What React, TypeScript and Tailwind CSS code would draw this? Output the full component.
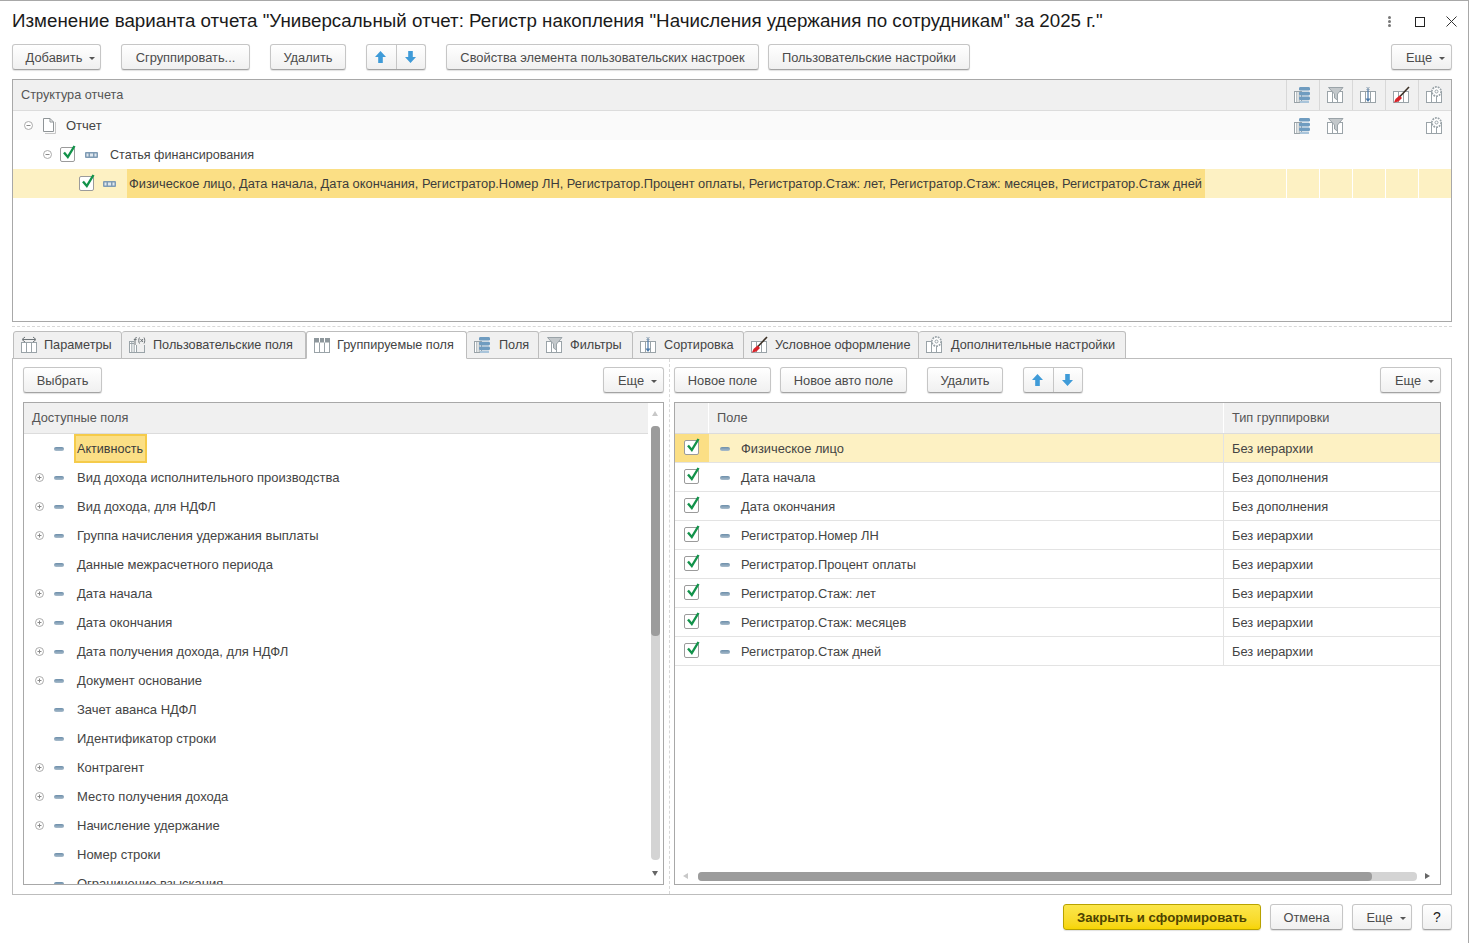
import type { ReactNode } from "react";

const availableFields: [string, boolean][] = [
  ["Активность", false],
  ["Вид дохода исполнительного производства", true],
  ["Вид дохода, для НДФЛ", true],
  ["Группа начисления удержания выплаты", true],
  ["Данные межрасчетного периода", false],
  ["Дата начала", true],
  ["Дата окончания", true],
  ["Дата получения дохода, для НДФЛ", true],
  ["Документ основание", true],
  ["Зачет аванса НДФЛ", false],
  ["Идентификатор строки", false],
  ["Контрагент", true],
  ["Место получения дохода", true],
  ["Начисление удержание", true],
  ["Номер строки", false],
  ["Ограничение взыскания", false],
];

const groupFields = [
  ["Физическое лицо", "Без иерархии"],
  ["Дата начала", "Без дополнения"],
  ["Дата окончания", "Без дополнения"],
  ["Регистратор.Номер ЛН", "Без иерархии"],
  ["Регистратор.Процент оплаты", "Без иерархии"],
  ["Регистратор.Стаж: лет", "Без иерархии"],
  ["Регистратор.Стаж: месяцев", "Без иерархии"],
  ["Регистратор.Стаж дней", "Без иерархии"],
];

function GridBase({ x = 1, w = 15 }: { x?: number; w?: number }) {
  const c = "#9aa3a8";
  const step = w / 3;
  return (
    <g fill="none" stroke={c} strokeWidth="1">
      <rect x={x + 0.5} y="5.5" width={w} height="11" fill="#fff" />
      <path d={`M${x + 0.5 + step} 5.5V16.5M${x + 0.5 + step * 2} 5.5V16.5`} />
    </g>
  );
}

function FieldsIcon() {
  return (
    <svg width="18" height="18" viewBox="0 0 18 18">
      <GridBase w={7} />
      <g fill="#6f9cc0">
        <rect x="6" y="1" width="11" height="3.6" rx="1.4" />
        <rect x="6" y="5.8" width="11" height="3.6" rx="1.4" />
        <rect x="6" y="10.6" width="11" height="3.6" rx="1.4" />
      </g>
      <rect x="7" y="15" width="9" height="2" fill="#a9c4da" />
    </svg>
  );
}

function FilterIcon() {
  return (
    <svg width="18" height="18" viewBox="0 0 18 18">
      <GridBase />
      <path d="M2.5 1.5H17L11.5 8V14L8.5 12V8Z" fill="#c3c8cb" stroke="#9aa3a8" />
    </svg>
  );
}

function SortIcon() {
  return (
    <svg width="18" height="18" viewBox="0 0 18 18">
      <GridBase />
      <path d="M9 3V15" stroke="#4a78a8" strokeWidth="1.2" />
      <path d="M6.5 12.5H11.5L9 16Z" fill="#4a78a8" />
      <path d="M7.5 1L10.5 4M10.5 1L7.5 4" stroke="#7d93a8" strokeWidth="0.9" />
    </svg>
  );
}

function BrushIcon() {
  return (
    <svg width="18" height="18" viewBox="0 0 18 18">
      <GridBase />
      <path d="M17 1L7.5 11" stroke="#3c3026" strokeWidth="1.6" />
      <path d="M7.5 9.5L10 12L6.5 15.5L2 16.5L3.5 13Z" fill="#d8232a" />
    </svg>
  );
}

function GearIcon() {
  return (
    <svg width="18" height="18" viewBox="0 0 18 18">
      <GridBase />
      <circle cx="11.5" cy="5.5" r="4.6" fill="#fff" stroke="#9aa3a8" strokeWidth="1.7" strokeDasharray="1.8 1" />
      <circle cx="11.5" cy="5.5" r="1.5" fill="#fff" stroke="#9aa3a8" />
    </svg>
  );
}

function ParamsIcon() {
  return (
    <svg width="18" height="18" viewBox="0 0 18 18">
      <rect x="1.5" y="6.5" width="15" height="10" fill="#fff" stroke="#9aa3a8" />
      <path d="M6.5 6.5V16.5M11.5 6.5V16.5" stroke="#9aa3a8" />
      <path d="M3 3.5H15" stroke="#6c7377" />
      <path d="M5 1L2 3.5L5 6M13 1L16 3.5L13 6" fill="none" stroke="#6c7377" />
    </svg>
  );
}

function FormulaIcon() {
  return (
    <svg width="18" height="18" viewBox="0 0 18 18">
      <GridBase w={7} />
      <rect x="1.5" y="7.5" width="15" height="9" fill="none" stroke="#9aa3a8" />
      <rect x="6" y="0" width="12" height="9" fill="#f0f0f0" />
      <path d="M7 9V3C7 1.8 8 1.5 9 1.7M5.8 3.6H8.6" fill="none" stroke="#6c7377" />
      <path d="M11.5 1.5C10.5 3 10.5 6 11.5 7.5M16 1.5C17 3 17 6 16 7.5M12.5 3L15 6M15 3L12.5 6" fill="none" stroke="#6c7377" />
    </svg>
  );
}

function GroupedIcon() {
  return (
    <svg width="18" height="18" viewBox="0 0 18 18">
      <GridBase />
      <rect x="1" y="2" width="16" height="4.5" fill="#8e979c" />
      <path d="M6.5 2V6.5M11.5 2V6.5" stroke="#fff" />
    </svg>
  );
}

function CheckBox() {
  return (
    <span className="relative block h-[15px] w-[15px] shrink-0 rounded-[2px] border border-[#9b9b9b] bg-white">
      <svg className="absolute -top-[4px] left-[1px]" width="15" height="16" viewBox="0 0 15 16">
        <path d="M2 8.5L5.8 13L12.5 2" fill="none" stroke="#12924a" strokeWidth="2.4" />
      </svg>
    </span>
  );
}

function TreeToggle({ open }: { open: boolean }) {
  return (
    <svg className="block shrink-0" width="9" height="9" viewBox="0 0 9 9">
      <circle cx="4.5" cy="4.5" r="4" fill="#fff" stroke="#ababab" />
      <path d={open ? "M2.5 4.5H6.5" : "M2.5 4.5H6.5M4.5 2.5V6.5"} stroke="#8a8a8a" />
    </svg>
  );
}

function DashIcon() {
  return <span className="block h-[4px] w-[10px] shrink-0 rounded-[2px] bg-gradient-to-b from-[#6d8fab] to-[#a9bccb]" />;
}

function GroupBar() {
  return (
    <svg className="block shrink-0" width="13" height="6" viewBox="0 0 13 6">
      <rect width="13" height="6" rx="1" fill="#7f9bb4" />
      <path d="M1.5 1.5H3.5V4.5H1.5ZM5 1.5H8V4.5H5ZM9.5 1.5H11.5V4.5H9.5Z" fill="#dfe7ee" />
    </svg>
  );
}

function DocIcon() {
  return (
    <svg className="block shrink-0" width="14" height="16" viewBox="0 0 14 16">
      <path d="M3 15.5H13.5V4" fill="none" stroke="#c6c6c6" />
      <path d="M1.5 .5H8L11.5 4V13.5H1.5Z" fill="#fff" stroke="#8f9497" />
      <path d="M8 .5V4H11.5" fill="none" stroke="#8f9497" />
    </svg>
  );
}

function Btn({ children, className, more }: { children: ReactNode; className: string; more?: boolean }) {
  return (
    <button className={`flex h-[26px] shrink-0 items-center justify-center gap-[7px] rounded-[3px] border border-[#c6c6c6] border-b-[#a3a3a3] bg-gradient-to-b from-white to-[#f0f0f0] pt-[1px] text-[12.85px] text-[#4b4b4b] shadow-[0_1px_1px_rgba(0,0,0,0.12)] ${more ? "pl-[8px]" : ""} ${className}`}>
      {children}
      {more && <span className="mt-[1px] h-0 w-0 border-x-[3px] border-t-[3px] border-x-transparent border-t-[#555]" />}
    </button>
  );
}

function MoveBtns({ className }: { className: string }) {
  const up = "M6.5 1L12 7H8.8V13H4.2V7H1Z";
  const down = "M6.5 13L12 7H8.8V1H4.2V7H1Z";
  return (
    <div className={`flex h-[26px] w-[60px] shrink-0 rounded-[3px] border border-[#c6c6c6] border-b-[#a3a3a3] bg-gradient-to-b from-white to-[#f0f0f0] shadow-[0_1px_1px_rgba(0,0,0,0.12)] ${className}`}>
      <span className="flex flex-1 items-center justify-center border-r border-[#c6c6c6] pr-[1px]">
        <svg width="13" height="14" viewBox="0 0 13 14"><path d={up} fill="#3f9bd8" /></svg>
      </span>
      <span className="flex flex-1 items-center justify-center pr-[1px]">
        <svg width="13" height="14" viewBox="0 0 13 14"><path d={down} fill="#3f9bd8" /></svg>
      </span>
    </div>
  );
}

function Tab({ icon, label, active, className }: { icon: ReactNode; label: string; active?: boolean; className: string }) {
  return (
    <div className={`flex h-[28px] items-center rounded-t-[3px] border border-[#bdbdbd] pl-[6px] text-[12.7px] ${active ? "gap-[6px] border-b-white bg-white" : "gap-[7px] border-l-0 bg-[#f0f0f0]"} ${className}`}>
      {icon}
      <span className="whitespace-nowrap pt-[2px]">{label}</span>
    </div>
  );
}

const iconCols = ["fields", "filter", "sort", "brush", "gear"];

function ColIcon({ kind }: { kind: string }) {
  if (kind === "fields") return <FieldsIcon />;
  if (kind === "filter") return <FilterIcon />;
  if (kind === "sort") return <SortIcon />;
  if (kind === "brush") return <BrushIcon />;
  return <GearIcon />;
}

export default function App() {
  return (
    <div className="h-[943px] w-[1473px] overflow-hidden bg-white font-['Liberation_Sans',Arial,sans-serif] text-[13px] text-[#444]">
      <div className="h-[943px] w-[1469px] border-r border-t border-[#a8a8a8]">
        <div className="flex h-[43px] items-center pb-[2px] pl-[12px] pr-[11px]">
          <h1 className="whitespace-nowrap text-[18.75px] font-normal text-[#1a1a1a]">
            Изменение варианта отчета "Универсальный отчет: Регистр накопления "Начисления удержания по сотрудникам" за 2025 г."
          </h1>
          <div className="ml-auto flex items-center">
            <span className="flex flex-col gap-[1px]">
              <span className="h-[3px] w-[3px] rounded-full bg-[#777]" />
              <span className="h-[3px] w-[3px] rounded-full bg-[#777]" />
              <span className="h-[3px] w-[3px] rounded-full bg-[#777]" />
            </span>
            <span className="ml-[24px] h-[10px] w-[10px] border border-[#222]" />
            <svg className="ml-[21px]" width="11" height="11" viewBox="0 0 11 11">
              <path d="M.5 .5L10.5 10.5M10.5 .5L.5 10.5" stroke="#333" />
            </svg>
          </div>
        </div>

        <div className="flex w-[1452px] pl-[12px]">
          <Btn className="w-[89px]" more>Добавить</Btn>
          <Btn className="ml-[20px] w-[129px]">Сгруппировать...</Btn>
          <Btn className="ml-[20px] w-[76px]">Удалить</Btn>
          <MoveBtns className="ml-[20px]" />
          <Btn className="ml-[20px] w-[313px]">Свойства элемента пользовательских настроек</Btn>
          <Btn className="ml-[9px] w-[202px]">Пользовательские настройки</Btn>
          <Btn className="ml-auto w-[61px]" more>Еще</Btn>
        </div>

        <section className="ml-[12px] mt-[9px] h-[243px] w-[1440px] overflow-hidden border border-[#a8a8a8]">
          <div className="flex h-[31px] border-b border-[#dcdcdc] bg-[#f0f0f0] text-[12.7px]">
            <div className="flex flex-1 items-center pl-[8px] pt-[1px] text-[#555]">Структура отчета</div>
            {iconCols.map((k) => (
              <div key={k} className="flex w-[33px] items-center justify-center border-l border-[#d8d8d8] pb-[1px] pr-[2px]">
                <ColIcon kind={k} />
              </div>
            ))}
          </div>
          <div className="flex h-[29px] items-center bg-[#fafafa]">
            <div className="flex flex-1 items-center pl-[11px]">
              <TreeToggle open />
              <span className="ml-[9px]"><DocIcon /></span>
              <span className="ml-[10px]">Отчет</span>
            </div>
            <div className="flex w-[33px] justify-center pr-[2px]"><FieldsIcon /></div>
            <div className="flex w-[33px] justify-center pr-[2px]"><FilterIcon /></div>
            <div className="w-[33px]" />
            <div className="w-[33px]" />
            <div className="flex w-[33px] justify-center pr-[2px]"><GearIcon /></div>
          </div>
          <div className="flex h-[29px] items-center pl-[30px]">
            <TreeToggle open />
            <span className="ml-[8px]"><CheckBox /></span>
            <span className="ml-[10px]"><GroupBar /></span>
            <span className="ml-[12px] pt-[1px] text-[12.6px]">Статья финансирования</span>
          </div>
          <div className="flex h-[29px] bg-[#fdf1c3]">
            <div className="flex flex-1 items-center pl-[66px]">
              <CheckBox />
              <span className="ml-[9px]"><GroupBar /></span>
              <span className="ml-[11px] flex h-[29px] w-[1078px] items-center whitespace-nowrap bg-[#fbdf85] pl-[2px] text-[12.85px] text-[#3c3c3c]">
                Физическое лицо, Дата начала, Дата окончания, Регистратор.Номер ЛН, Регистратор.Процент оплаты, Регистратор.Стаж: лет, Регистратор.Стаж: месяцев, Регистратор.Стаж дней
              </span>
            </div>
            {iconCols.map((k) => (
              <div key={k} className="w-[33px] border-l border-white" />
            ))}
          </div>
        </section>

        <div className="ml-[12px] mt-[4px] w-[1440px] border-t border-dashed border-[#d8d8d8]" />

        <div className="relative z-10 mb-[-1px] ml-[13px] mt-[4px] flex">
          <Tab className="w-[109px] !gap-[6px] !border-l bg-[#f0f0f0]" icon={<ParamsIcon />} label="Параметры" />
          <Tab className="w-[184px]" icon={<FormulaIcon />} label="Пользовательские поля" />
          <Tab active className="w-[161px]" icon={<GroupedIcon />} label="Группируемые поля" />
          <Tab className="w-[72px] !gap-[8px]" icon={<FieldsIcon />} label="Поля" />
          <Tab className="w-[94px]" icon={<FilterIcon />} label="Фильтры" />
          <Tab className="w-[111px]" icon={<SortIcon />} label="Сортировка" />
          <Tab className="w-[175px]" icon={<BrushIcon />} label="Условное оформление" />
          <Tab className="w-[207px] !gap-[8px]" icon={<GearIcon />} label="Дополнительные настройки" />
        </div>

        <section className="ml-[12px] flex h-[537px] w-[1440px] border border-[#bdbdbd] px-[10px]">
          <div className="flex h-full w-[641px] flex-col pb-[9px] pt-[8px]">
            <div className="flex justify-between">
              <Btn className="w-[79px]">Выбрать</Btn>
              <Btn className="w-[61px]" more>Еще</Btn>
            </div>
            <div className="relative mt-[9px] min-h-0 flex-1 overflow-hidden border border-[#a8a8a8]">
              <div className="mr-[15px] flex h-[31px] items-center border-b border-[#dcdcdc] bg-[#f0f0f0] pl-[8px] text-[12.75px] text-[#555]">
                Доступные поля
              </div>
              {availableFields.map(([name, expandable], i) => (
                <div key={name} className="flex h-[29px] items-center pl-[11px]">
                  <span className="w-[9px]">{expandable && <TreeToggle open={false} />}</span>
                  <span className="ml-[10px]"><DashIcon /></span>
                  {i === 0 ? (
                    <span className="ml-[10px] flex h-[29px] w-[73px] items-center border-2 border-[#f5cb4a] bg-[#fbdf85] pl-[1px] pt-[1px] text-[12.6px] text-[#3c3c3c]">{name}</span>
                  ) : (
                    <span className="ml-[13px]">{name}</span>
                  )}
                </div>
              ))}
              <div className="absolute bottom-0 right-0 top-0 w-[15px] bg-white">
                <span className="absolute left-[4px] top-[8px] h-0 w-0 border-x-[3px] border-b-[5px] border-x-transparent border-b-[#c8c8c8]" />
                <div className="absolute left-[3px] top-[23px] h-[434px] w-[9px] rounded-[4px] bg-[#d4d4d4]">
                  <div className="h-[210px] rounded-[4px] bg-[#9c9c9c]" />
                </div>
                <span className="absolute bottom-[8px] left-[4px] h-0 w-0 border-x-[3px] border-t-[5px] border-x-transparent border-t-[#666]" />
              </div>
            </div>
          </div>

          <div className="flex w-[10px] justify-center">
            <div className="h-full border-l border-dashed border-[#d8d8d8]" />
          </div>

          <div className="flex h-full w-[767px] flex-col pb-[9px] pt-[8px]">
            <div className="flex">
              <Btn className="w-[97px]">Новое поле</Btn>
              <Btn className="ml-[9px] w-[127px]">Новое авто поле</Btn>
              <Btn className="ml-[20px] w-[76px]">Удалить</Btn>
              <MoveBtns className="ml-[20px]" />
              <Btn className="ml-auto w-[61px]" more>Еще</Btn>
            </div>
            <div className="relative mt-[9px] min-h-0 flex-1 overflow-hidden border border-[#a8a8a8]">
              <div className="flex h-[31px] border-b border-[#dcdcdc] bg-[#f0f0f0] text-[12.75px] text-[#555]">
                <div className="w-[34px] border-r border-[#fff]" />
                <div className="flex w-[515px] items-center border-r border-[#fff] pl-[8px]">Поле</div>
                <div className="flex flex-1 items-center pl-[8px]">Тип группировки</div>
              </div>
              {groupFields.map(([name, kind], i) => (
                <div key={name} className={`flex h-[29px] border-b border-[#e3e3e3] text-[12.85px] ${i === 0 ? "bg-[#fdf1c3]" : ""}`}>
                  <div className={`flex w-[34px] justify-center pr-[1px] pt-[6px] ${i === 0 ? "bg-[#fbdf85]" : ""}`}>
                    <CheckBox />
                  </div>
                  <div className="flex w-[514px] items-center pl-[11px] pt-[1px]">
                    <DashIcon />
                    <span className="ml-[11px]">{name}</span>
                  </div>
                  <div className="flex flex-1 items-center border-l border-[#e3e3e3] pl-[8px] pt-[1px]">{kind}</div>
                </div>
              ))}
              <div className="absolute bottom-0 left-0 right-0 h-[15px]">
                <span className="absolute left-[8px] top-[4px] h-0 w-0 border-y-[3px] border-r-[5px] border-y-transparent border-r-[#c8c8c8]" />
                <div className="absolute left-[23px] top-[3px] h-[9px] w-[719px] rounded-[4px] bg-[#d4d4d4]">
                  <div className="h-[9px] w-[674px] rounded-[4px] bg-[#9c9c9c]" />
                </div>
                <span className="absolute right-[10px] top-[4px] h-0 w-0 border-y-[3px] border-l-[5px] border-y-transparent border-l-[#666]" />
              </div>
            </div>
          </div>
        </section>

        <div className="mt-[9px] flex w-[1452px] justify-end">
          <button className="flex h-[26px] w-[198px] items-center justify-center rounded-[3px] border border-[#b8a200] bg-gradient-to-b from-[#fbe64a] to-[#f7d500] pt-[1px] text-[13.2px] font-bold text-[#4d4300] shadow-[0_1px_1px_rgba(0,0,0,0.12)]">
            Закрыть и сформировать
          </button>
          <Btn className="ml-[9px] w-[73px]">Отмена</Btn>
          <Btn className="ml-[9px] w-[60px]" more>Еще</Btn>
          <Btn className="ml-[10px] w-[30px] !text-[14px] !text-[#222]">?</Btn>
        </div>
      </div>
    </div>
  );
}
